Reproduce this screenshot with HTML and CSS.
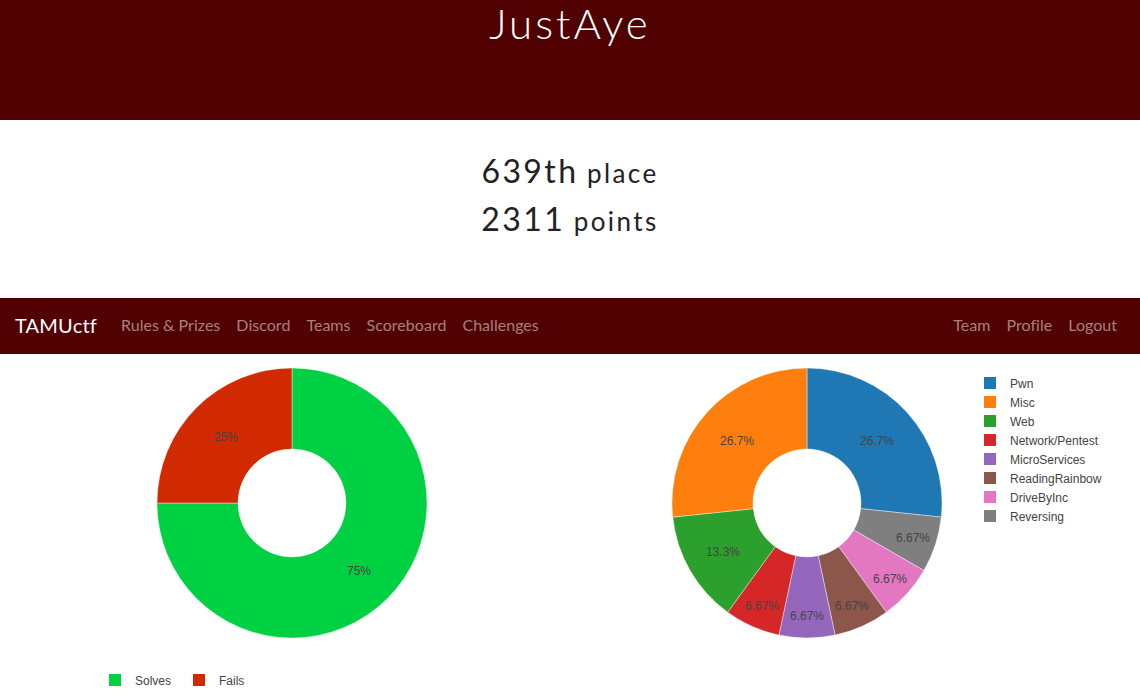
FILE: index.html
```html
<!DOCTYPE html>
<html lang="en">
<head>
<meta charset="utf-8">
<title>JustAye</title>
<link rel="stylesheet" href="styles.css">
</head>
<body>
<header class="jumbo">
  <h1 class="team-name">JustAye</h1>
</header>
<section class="standing">
  <h2 class="rank"><span class="big">639th</span> <small>place</small></h2>
  <h2 class="score"><span class="big">2311</span> <small>points</small></h2>
</section>
<nav class="navbar">
  <a class="brand" href="#">TAMUctf</a>
  <ul class="nav-links">
    <li><a href="#">Rules &amp; Prizes</a></li>
    <li><a href="#">Discord</a></li>
    <li><a href="#">Teams</a></li>
    <li><a href="#">Scoreboard</a></li>
    <li><a href="#">Challenges</a></li>
  </ul>
  <ul class="nav-links nav-right">
    <li><a href="#">Team</a></li>
    <li><a href="#">Profile</a></li>
    <li><a href="#">Logout</a></li>
  </ul>
</nav>
<main class="charts">
  <svg class="chart" width="570" height="345" viewBox="0 0 570 345">
    <g class="slices">
      <path fill="#00d142" d="M292,14 A135,135 0 1 1 157,149 L238,149 A54,54 0 1 0 292,95 Z"/>
      <path fill="#d12a00" d="M157,149 A135,135 0 0 1 292,14 L292,95 A54,54 0 0 0 238,149 Z"/>
    </g>
    <g class="slice-text">
      <text x="359" y="221">75%</text>
      <text x="226" y="87">25%</text>
    </g>
    <g class="legend">
      <rect x="109" y="320" width="12" height="12" fill="#00d142"/>
      <text class="legend-text" x="135" y="331">Solves</text>
      <rect x="193" y="320" width="12" height="12" fill="#d12a00"/>
      <text class="legend-text" x="219" y="331">Fails</text>
    </g>
  </svg>
  <svg class="chart" width="570" height="345" viewBox="0 0 570 345">
    <g class="slices">
      <path fill="#1f77b4" d="M237,14 A135,135 0 0 1 371.26,163.11 L290.70,154.64 A54,54 0 0 0 237,95 Z"/>
      <path fill="#7f7f7f" d="M371.26,163.11 A135,135 0 0 1 353.91,216.5 L283.77,176 A54,54 0 0 0 290.70,154.64 Z"/>
      <path fill="#e377c2" d="M353.91,216.5 A135,135 0 0 1 316.35,258.22 L268.74,192.69 A54,54 0 0 0 283.77,176 Z"/>
      <path fill="#8c564b" d="M316.35,258.22 A135,135 0 0 1 265.07,281.05 L248.23,201.82 A54,54 0 0 0 268.74,192.69 Z"/>
      <path fill="#9467bd" d="M265.07,281.05 A135,135 0 0 1 208.93,281.05 L225.77,201.82 A54,54 0 0 0 248.23,201.82 Z"/>
      <path fill="#d62728" d="M208.93,281.05 A135,135 0 0 1 157.65,258.22 L205.26,192.69 A54,54 0 0 0 225.77,201.82 Z"/>
      <path fill="#2ca02c" d="M157.65,258.22 A135,135 0 0 1 102.74,163.11 L183.30,154.64 A54,54 0 0 0 205.26,192.69 Z"/>
      <path fill="#ff7f0e" d="M102.74,163.11 A135,135 0 0 1 237,14 L237,95 A54,54 0 0 0 183.30,154.64 Z"/>
    </g>
    <g class="slice-text">
      <text x="307" y="91">26.7%</text>
      <text x="167" y="91">26.7%</text>
      <text x="153" y="202">13.3%</text>
      <text x="192" y="256">6.67%</text>
      <text x="237" y="266">6.67%</text>
      <text x="282" y="256">6.67%</text>
      <text x="320" y="229">6.67%</text>
      <text x="343" y="188">6.67%</text>
    </g>
    <g class="legend">
      <rect x="414" y="23" width="12" height="12" fill="#1f77b4"/>
      <text class="legend-text" x="440" y="34">Pwn</text>
      <rect x="414" y="42" width="12" height="12" fill="#ff7f0e"/>
      <text class="legend-text" x="440" y="53">Misc</text>
      <rect x="414" y="61" width="12" height="12" fill="#2ca02c"/>
      <text class="legend-text" x="440" y="72">Web</text>
      <rect x="414" y="80" width="12" height="12" fill="#d62728"/>
      <text class="legend-text" x="440" y="91">Network/Pentest</text>
      <rect x="414" y="99" width="12" height="12" fill="#9467bd"/>
      <text class="legend-text" x="440" y="110">MicroServices</text>
      <rect x="414" y="118" width="12" height="12" fill="#8c564b"/>
      <text class="legend-text" x="440" y="129">ReadingRainbow</text>
      <rect x="414" y="137" width="12" height="12" fill="#e377c2"/>
      <text class="legend-text" x="440" y="148">DriveByInc</text>
      <rect x="414" y="156" width="12" height="12" fill="#7f7f7f"/>
      <text class="legend-text" x="440" y="167">Reversing</text>
    </g>
  </svg>
</main>
</body>
</html>
```
FILE: styles.css
```css
* { box-sizing: border-box; }
html, body {
  margin: 0;
  padding: 0;
  background: #fff;
  font-family: "Lato", "Liberation Sans", sans-serif;
  color: #212529;
}
.jumbo {
  background: #500000;
  height: 120px;
  text-align: center;
}
.team-name {
  margin: 0;
  padding-top: 0;
  font-family: "Lato", sans-serif;
  font-weight: 300;
  font-size: 42px;
  line-height: 47px;
  letter-spacing: 3px;
  color: #fff;
}
.standing {
  height: 178px;
  padding-top: 26px;
  text-align: center;
}
.standing h2 {
  margin: 0;
  font-weight: 400;
  line-height: 47px;
  letter-spacing: 2.4px;
  color: #222;
}
.standing .rank { position: relative; top: 1px; }
.standing .score { position: relative; top: -1px; }
.standing .big { font-size: 32px; }
.standing small { font-size: 26px; }
.navbar {
  display: flex;
  align-items: center;
  height: 56px;
  padding: 7px 16px 9px 15px;
  background: #500000;
}
.brand {
  margin-right: 16px;
  font-size: 20px;
  line-height: 30px;
  letter-spacing: 0.2px;
  color: #fff;
  text-decoration: none;
}
.nav-links {
  display: flex;
  margin: 0;
  padding: 0;
  list-style: none;
}
.nav-links a {
  display: block;
  padding: 8px;
  font-size: 16px;
  line-height: 24px;
  letter-spacing: 0.03px;
  color: rgba(255, 255, 255, 0.5);
  text-decoration: none;
}
.nav-right { margin-left: auto; margin-right: -1px; }
.charts {
  display: flex;
  height: 345px;
}
.chart { display: block; }
.slices path { stroke: #fff; stroke-width: 0.4; }
.slice-text text {
  font-family: "Liberation Sans", Arial, sans-serif;
  font-size: 12px;
  fill: #444;
  text-anchor: middle;
}
.legend-text {
  font-family: "Liberation Sans", Arial, sans-serif;
  font-size: 12px;
  fill: #444;
}
```
